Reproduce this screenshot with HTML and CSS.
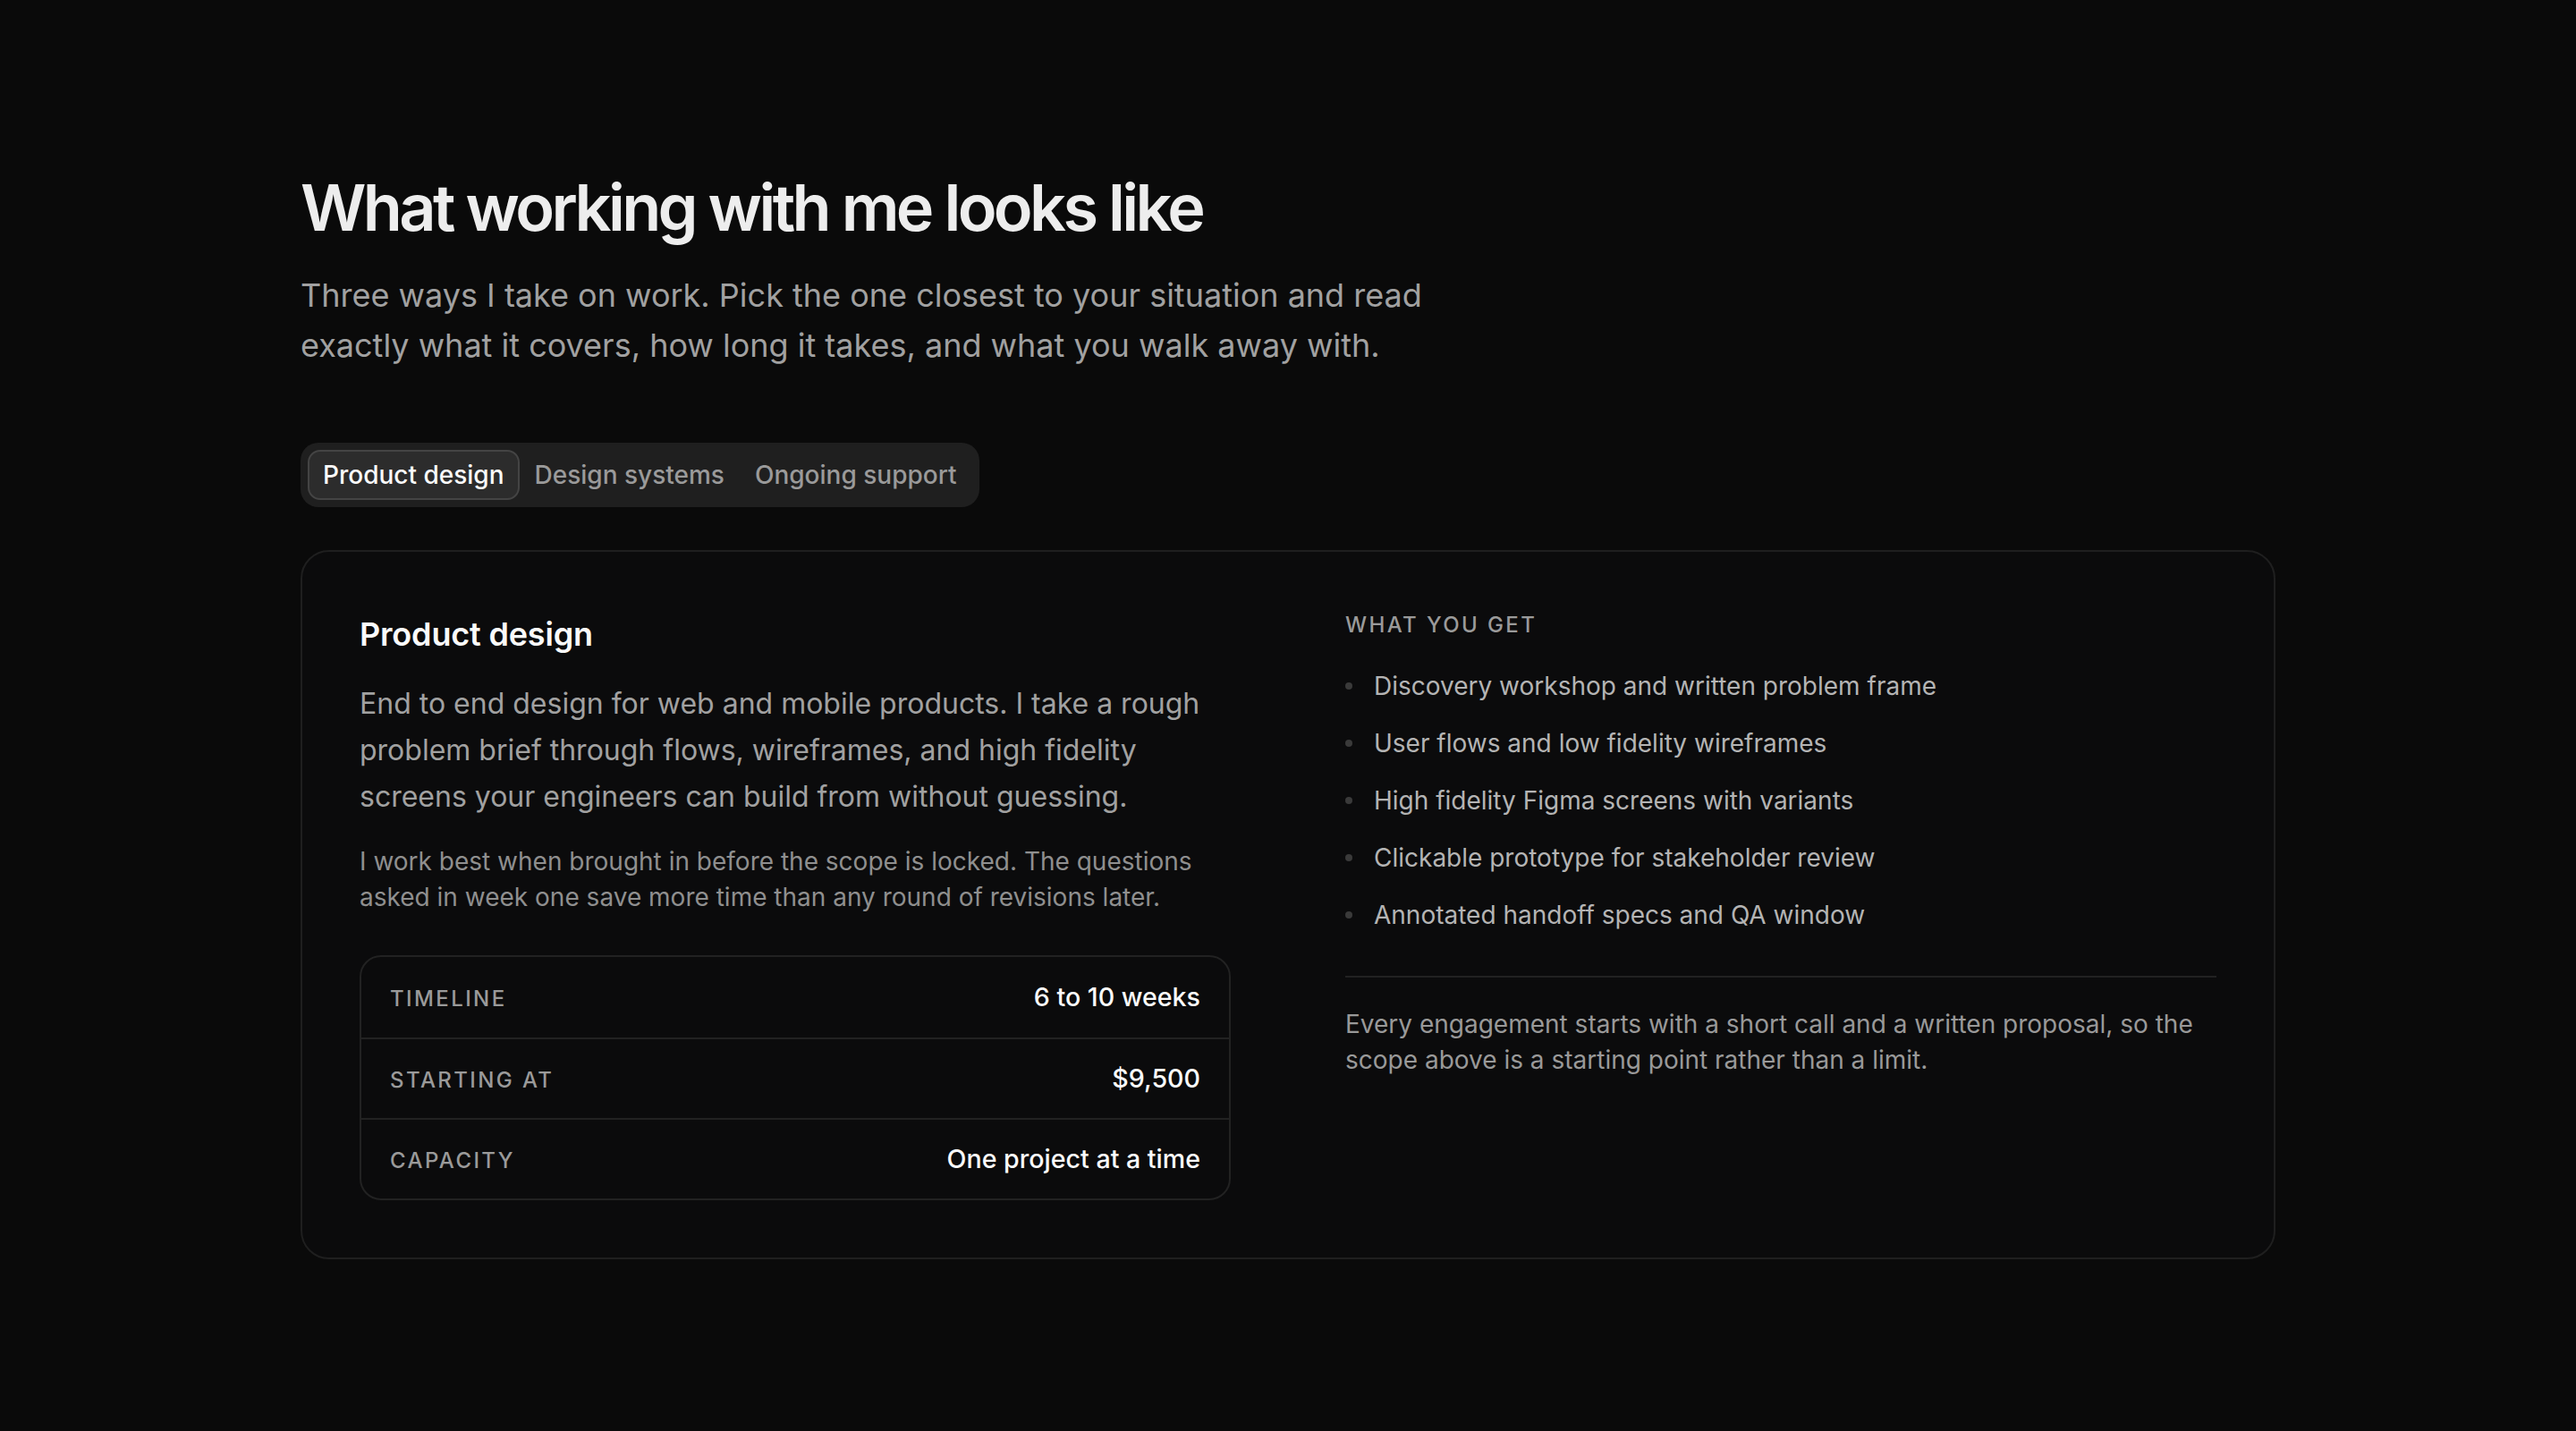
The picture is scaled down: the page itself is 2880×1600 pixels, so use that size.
FILE: index.html
```html
<!DOCTYPE html>
<html lang="en">
<head>
<meta charset="utf-8">
<title>What working with me looks like</title>
<link rel="stylesheet" href="styles.css">
</head>
<body>
<main class="page">
  <section class="services">
    <h1 class="title">What working with me looks like</h1>
    <p class="lead">Three ways I take on work. Pick the one closest to your situation and read exactly what it covers, how long it takes, and what you walk away with.</p>

    <div class="tabs" role="tablist">
      <button class="tab tab-active" role="tab">Product design</button>
      <button class="tab" role="tab">Design systems</button>
      <button class="tab" role="tab">Ongoing support</button>
    </div>

    <div class="card">
      <div class="col-left">
        <h2 class="card-title">Product design</h2>
        <p class="card-desc">End to end design for web and mobile products. I take a rough problem brief through flows, wireframes, and high fidelity screens your engineers can build from without guessing.</p>
        <p class="card-note">I work best when brought in before the scope is locked. The questions asked in week one save more time than any round of revisions later.</p>
        <dl class="facts">
          <div class="fact-row">
            <dt class="fact-label">Timeline</dt>
            <dd class="fact-value">6 to 10 weeks</dd>
          </div>
          <div class="fact-row">
            <dt class="fact-label">Starting at</dt>
            <dd class="fact-value">$9,500</dd>
          </div>
          <div class="fact-row">
            <dt class="fact-label">Capacity</dt>
            <dd class="fact-value">One project at a time</dd>
          </div>
        </dl>
      </div>
      <div class="col-right">
        <h3 class="eyebrow">What you get</h3>
        <ul class="deliverables">
          <li class="deliverable">Discovery workshop and written problem frame</li>
          <li class="deliverable">User flows and low fidelity wireframes</li>
          <li class="deliverable">High fidelity Figma screens with variants</li>
          <li class="deliverable">Clickable prototype for stakeholder review</li>
          <li class="deliverable">Annotated handoff specs and QA window</li>
        </ul>
        <p class="footnote">Every engagement starts with a short call and a written proposal, so the scope above is a starting point rather than a limit.</p>
      </div>
    </div>
  </section>
</main>
</body>
</html>
```
FILE: styles.css
```css
html {
  zoom: 2;
  background: #0a0a0a;
}

body {
  margin: 0;
  background: #0a0a0a;
  color: #ededed;
  font-family: Inter, "Noto Sans", "Liberation Sans", sans-serif;
  -webkit-font-smoothing: antialiased;
}

.page {
  max-width: 1200px;
  margin: 0 auto;
  padding: 96px 48px 96px;
  box-sizing: border-box;
}

.title {
  margin: 0;
  font-size: 36px;
  line-height: 1.1;
  font-weight: 600;
  letter-spacing: -0.05em;
  color: #ededed;
}

.lead {
  margin: 16px 0 0;
  max-width: 640px;
  font-size: 18px;
  line-height: 1.55;
  color: #a1a1a1;
}

.tabs {
  display: inline-flex;
  margin-top: 40px;
  padding: 4px;
  background: #1f1f1f;
  border-radius: 10px;
}

.tab {
  font-family: inherit;
  font-size: 14px;
  line-height: 18px;
  font-weight: 500;
  padding: 4px 7.5px;
  border: 1px solid transparent;
  border-radius: 7px;
  background: transparent;
  color: #9a9a9a;
  cursor: pointer;
}

.tab-active {
  background: #2c2c2c;
  border-color: #444;
  color: #fafafa;
}

.card {
  margin-top: 24px;
  display: grid;
  grid-template-columns: 1fr 1fr;
  gap: 64px;
  padding: 32px;
  border: 1px solid #1f1f1f;
  border-radius: 16px;
  background: #0b0b0c;
}

.card-title {
  margin: 0;
  font-size: 18px;
  line-height: 28px;
  font-weight: 600;
  color: #fafafa;
  letter-spacing: -0.005em;
}

.card-desc {
  margin: 12px 0 0;
  font-size: 16px;
  line-height: 26px;
  color: #a1a1a1;
}

.card-note {
  margin: 13px 0 0;
  font-size: 14px;
  line-height: 1.45;
  color: #8f8f8f;
}

.facts {
  margin: 22px 0 0;
  border: 1px solid #222;
  border-radius: 12px;
  overflow: hidden;
}

.fact-row {
  display: flex;
  align-items: center;
  justify-content: space-between;
  height: 44px;
  padding: 0 16px;
  border-top: 1px solid #222;
}

.fact-row:first-child {
  border-top: none;
  height: 45px;
}

.fact-label {
  padding-top: 2px;
  font-size: 12px;
  letter-spacing: 0.1em;
  text-transform: uppercase;
  color: #9a9a9a;
  font-weight: 500;
}

.fact-value {
  margin: 0;
  font-size: 14.3px;
  font-weight: 500;
  color: #fafafa;
}

.eyebrow {
  margin: 0;
  font-size: 12px;
  line-height: 18px;
  font-weight: 500;
  letter-spacing: 0.1em;
  text-transform: uppercase;
  color: #9a9a9a;
}

.deliverables {
  list-style: none;
  margin: 14px 0 0;
  padding: 0 0 23px;
  display: flex;
  flex-direction: column;
  gap: 10px;
  border-bottom: 1px solid #222;
}

.deliverable {
  display: flex;
  align-items: center;
  gap: 12px;
  font-size: 14px;
  line-height: 22px;
  color: #b4b4b4;
}

.deliverable::before {
  content: "";
  flex: none;
  width: 4px;
  height: 4px;
  border-radius: 50%;
  background: #3a3a3a;
}

.footnote {
  margin: 16px 0 0;
  font-size: 14px;
  line-height: 1.45;
  color: #999;
}
```
